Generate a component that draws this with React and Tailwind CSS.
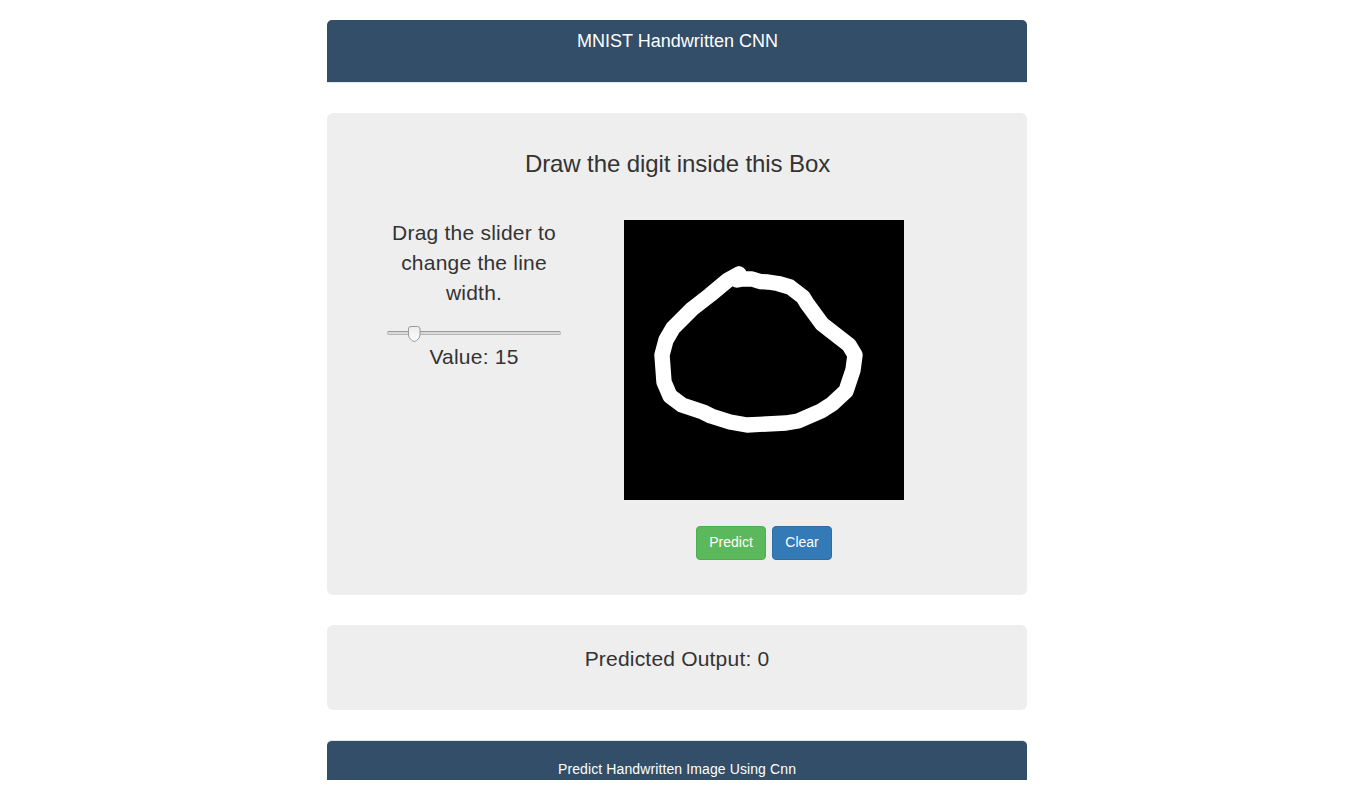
const strokePath =
  "M739 274L728 280L710 295L692 309L673 328L666 340L662 355L664 382L670 396L682 405L703 412L711 416L730 422L747 425L786 423L798 421L821 411L832 404L846 391L853 370L855 355L849 345L822 324L807 303.5L803 297L790 287L778 283.5L768 282L760 281.5L752 279L743 279L737 280L739 274";

function WidthSlider() {
  return (
    <div className="relative flex h-[17px] w-[174px] items-start pt-[5px]">
      <div className="h-1 w-full rounded-[2px] border border-[#b8b8b8] border-t-[#999] bg-[#d8d8d8]" />
      <svg className="absolute left-[21px] top-0" width="13" height="17" viewBox="0 0 13 17">
        <defs>
          <linearGradient id="thumb" x1="0" y1="0" x2="0" y2="1">
            <stop offset="0" stopColor="#ededed" />
            <stop offset="1" stopColor="#fcfcfc" />
          </linearGradient>
        </defs>
        <path
          d="M3 .5h6.500a2.500 2.500 0 0 1 2.500 2.500v6c0 3-3 5.800-5.750 6.600C3.500 14.800 .5 12 .5 9V3a2.500 2.500 0 0 1 2.500-2.500z"
          fill="url(#thumb)"
          stroke="#999"
        />
      </svg>
    </div>
  );
}

export default function App() {
  return (
    <div className="flex min-h-screen justify-center bg-white font-['Liberation_Sans',Arial,sans-serif] text-[#333]">
      <div className="flex w-[700px] flex-col pt-5 text-center">
        <header className="h-[63px] rounded-t-[5px] border-b border-[#e5e5e5] bg-[#324e68] pt-[11px] pl-px text-lg leading-5 tracking-[0.02px] text-white">
          MNIST Handwritten CNN
        </header>
        <main className="mt-[30px] h-[482px] rounded-md bg-[#eee] px-[60px] pt-[38px]">
          <h1 className="pl-px text-2xl leading-[26px] tracking-[-0.1px]">Draw the digit inside this Box</h1>
          <div className="mt-[43px] flex">
            <section className="w-[174px] text-[21px] leading-[30px] tracking-[0.22px]">
              <p className="-mt-[2px]">Drag the slider to change the line width.</p>
              <div className="mt-[18px]">
                <WidthSlider />
              </div>
              <p className="-mt-px">Value: 15</p>
            </section>
            <section className="ml-[63px] flex w-[280px] flex-col items-center">
              <svg className="bg-black" width="280" height="280" viewBox="624 220 280 280">
                <path d={strokePath} fill="none" stroke="#fff" strokeWidth="15.4" strokeLinecap="round" strokeLinejoin="round" />
              </svg>
              <div className="mt-[26px] flex gap-[6px] text-sm leading-5 text-white">
                <button className="h-[34px] w-[70px] rounded-[4px] border border-[#4cae4c] bg-[#5cb85c] pb-[2px]">Predict</button>
                <button className="h-[34px] w-[60px] rounded-[4px] border border-[#2e6da4] bg-[#337ab7] pb-[2px]">Clear</button>
              </div>
            </section>
          </div>
        </main>
        <section className="mt-[30px] h-[85px] rounded-md bg-[#eee] pt-[19px] text-[21px] leading-[30px] tracking-[0.2px]">
          Predicted Output: 0
        </section>
        <footer className="mt-[30px] h-10 rounded-t-[5px] border-t border-[#e5e5e5] bg-[#324e68] pt-[18px] text-sm leading-5 tracking-[0.11px] text-white">
          Predict Handwritten Image Using Cnn
        </footer>
      </div>
    </div>
  );
}
